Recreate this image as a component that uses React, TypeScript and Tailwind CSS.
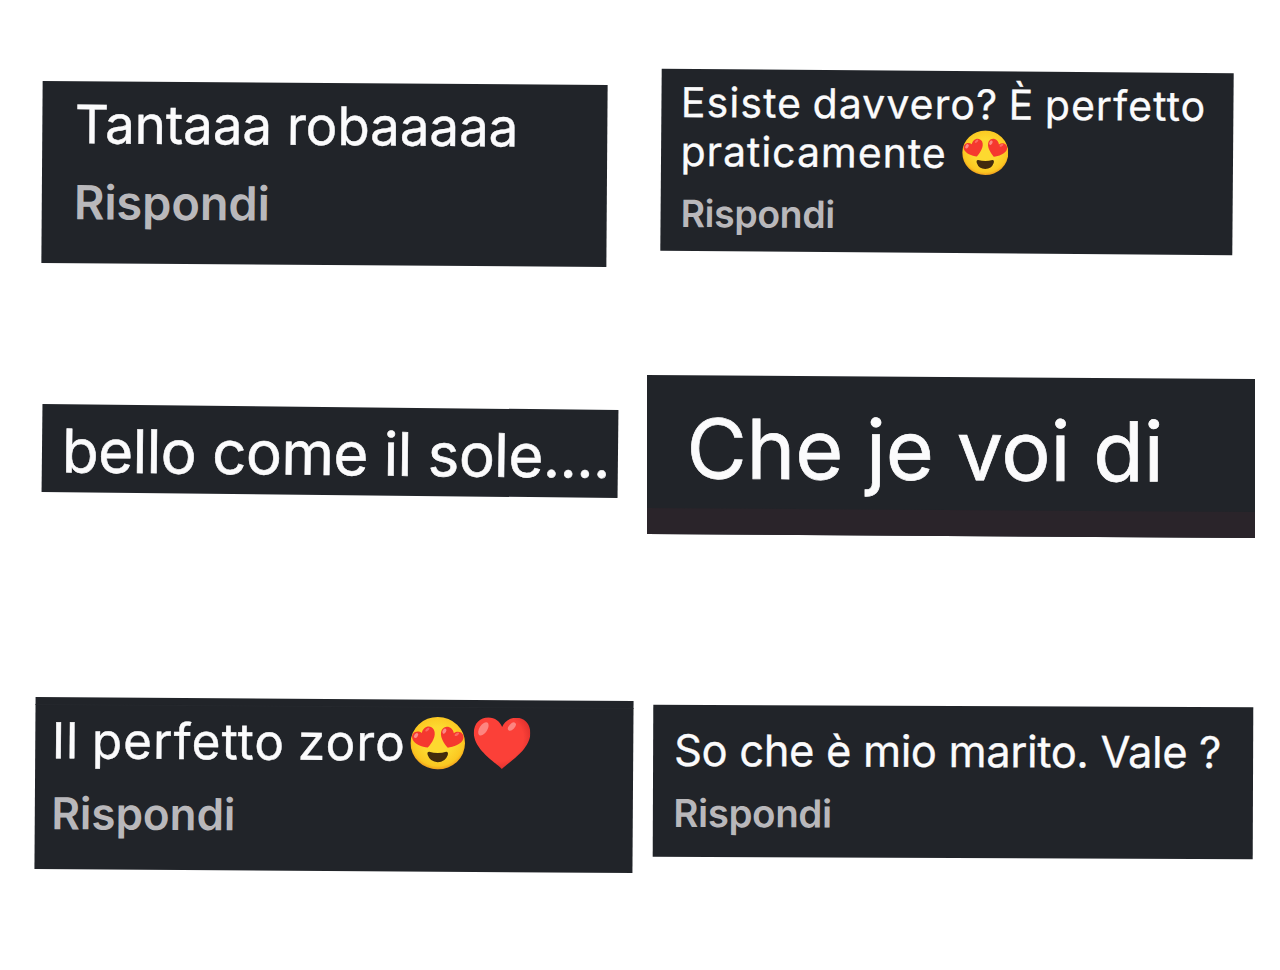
import React from "react";

function HeartEyes({ className }: { className: string }) {
    return (
        <svg viewBox="0 0 110 106" className={className} preserveAspectRatio="none">
            <defs>
                <radialGradient id="face" cx="50%" cy="46%" r="54%">
                    <stop offset="0.5" stopColor="#fdd930" />
                    <stop offset="0.88" stopColor="#fbc721" />
                    <stop offset="1" stopColor="#ef9d1d" />
                </radialGradient>
            </defs>
            <ellipse cx="55" cy="53" rx="54.5" ry="52.5" fill="url(#face)" />
            <path d="M38 70 Q55 75 72 70 Q77 70 75 77 Q70 91 55 91 Q40 91 35 77 Q33 70 38 70Z" fill="#422b0d" />
            <path d="M35 62 C24 61 7 55 4 44 C1 32 14 26 23 33 C25 20 40 15 47 26 C53 38 43 53 35 62Z" fill="#f5382f" />
            <path d="M75 62 C86 61 103 55 106 44 C109 32 96 26 87 33 C85 20 70 15 63 26 C57 38 67 53 75 62Z" fill="#f5382f" />
            <ellipse cx="11.5" cy="38" rx="3.5" ry="5.5" transform="rotate(35 11.5 38)" fill="#fb8a84" />
            <ellipse cx="34" cy="26" rx="2.5" ry="5" transform="rotate(50 34 26)" fill="#fb6a63" />
            <ellipse cx="68" cy="29" rx="3.5" ry="5.5" transform="rotate(30 68 29)" fill="#fb8a84" />
            <ellipse cx="93" cy="35" rx="2.5" ry="5" transform="rotate(60 93 35)" fill="#fb6a63" />
        </svg>
    );
}

function Heart({ className }: { className: string }) {
    return (
        <svg viewBox="0 0 115 105" className={className} preserveAspectRatio="none">
            <defs>
                <radialGradient id="heart" cx="42%" cy="40%" r="65%">
                    <stop offset="0.7" stopColor="#fb4038" />
                    <stop offset="1" stopColor="#d92d2b" />
                </radialGradient>
            </defs>
            <path d="M57.5 105 C49 94 1 67 1 32 C1 12 14 1 30 1 C43 1 53 9 57.5 20 C62 9 72 1 86 1 C102 1 114 13 114 32 C114 67 66 94 57.5 105Z" fill="url(#heart)" />
            <ellipse cx="20" cy="24" rx="8" ry="15" transform="rotate(32 20 24)" fill="#fd8580" />
            <ellipse cx="77" cy="19" rx="5.5" ry="10" transform="rotate(42 77 19)" fill="#fd8580" />
        </svg>
    );
}

export default function App() {
    return (
        <main className="flex h-[970px] w-[1280px] overflow-hidden bg-white font-['Inter',sans-serif] leading-none whitespace-nowrap text-[#fbfbfc]">
            <div className="flex w-[640px] flex-none flex-col">
                <section className="mt-[83px] ml-[42px] h-[182px] w-[565px] flex-none rotate-[0.41deg] bg-[#212429] pt-[17px]">
                    <p className="pl-[32.5px] text-[53px] tracking-[-0.15px] [-webkit-text-stroke:0.4px]">Tantaaa robaaaaa</p>
                    <p className="mt-[27px] pl-[32px] text-[47px] font-semibold tracking-[-0.15px] text-[#b9b8bb]">Rispondi</p>
                </section>

                <section className="mt-[142px] ml-[42px] h-[88px] w-[576px] flex-none rotate-[0.6deg] bg-[#212429] pt-[16px]">
                    <p className="pl-[20px] text-[60px] tracking-[-0.5px] [word-spacing:-0.5px] [-webkit-text-stroke:0.6px]">bello come il sole....</p>
                </section>

                <section className="mt-[204.3px] ml-[35px] h-[172px] w-[597.5px] flex-none rotate-[0.38deg] bg-[#212429] pt-[7px]">
                    <div className="h-px bg-[#25282d]" />
                    <div className="mt-[8.5px] flex h-[53px] items-center pl-[16.5px]">
                        <p className="w-[358px] flex-none pt-[1px] text-[49.5px] tracking-[1.1px] [word-spacing:-2.5px] [-webkit-text-stroke:0.4px]">Il perfetto zoro</p>
                        <HeartEyes className="h-[53px] w-[55px] flex-none" />
                        <Heart className="ml-[8px] h-[52px] w-[57.5px] flex-none" />
                    </div>
                    <p className="mt-[24.5px] pl-[16.5px] text-[44px] font-semibold tracking-[-0.05px] text-[#b9b8bb]">Rispondi</p>
                </section>
            </div>

            <div className="flex w-[640px] flex-none flex-col">
                <section className="mt-[71.3px] ml-[21px] h-[182px] w-[571.5px] flex-none rotate-[0.45deg] bg-[#212429] pt-[13px]">
                    <p className="pl-[19.5px] text-[41px] tracking-[1.05px] [word-spacing:-2px] [-webkit-text-stroke:0.3px]">Esiste davvero? È perfetto</p>
                    <div className="mt-[5px] flex h-[45px] items-center pl-[19.5px]">
                        <p className="w-[281px] flex-none pt-[2px] text-[41px] tracking-[0.95px] [-webkit-text-stroke:0.3px]">praticamente</p>
                        <HeartEyes className="h-[45px] w-[46.5px] flex-none" />
                    </div>
                    <p className="mt-[21.5px] pl-[20px] text-[37.5px] font-semibold tracking-[-0.4px] text-[#b9b8bb]">Rispondi</p>
                </section>

                <section className="mt-[123.7px] ml-[7px] h-[159px] w-[608px] flex-none skew-y-[0.38deg] bg-[#212429] pt-[31.5px]">
                    <p className="pl-[39.5px] text-[82.5px] tracking-[-0.2px] [-webkit-text-stroke:0.7px]">Che je voi di</p>
                    <div className="mt-[18.5px] h-[26.5px] bg-[#2a242a]" />
                </section>

                <section className="mt-[170px] ml-[13.3px] h-[152px] w-[599.5px] flex-none rotate-[0.22deg] bg-[#212429] pt-[23.5px]">
                    <p className="pl-[21px] text-[43.5px] tracking-[-0.35px] [-webkit-text-stroke:0.3px]">So che è mio marito. Vale ?</p>
                    <p className="mt-[22px] pl-[20.5px] text-[38.5px] font-semibold tracking-[-0.4px] text-[#b9b8bb]">Rispondi</p>
                </section>
            </div>
        </main>
    );
}
